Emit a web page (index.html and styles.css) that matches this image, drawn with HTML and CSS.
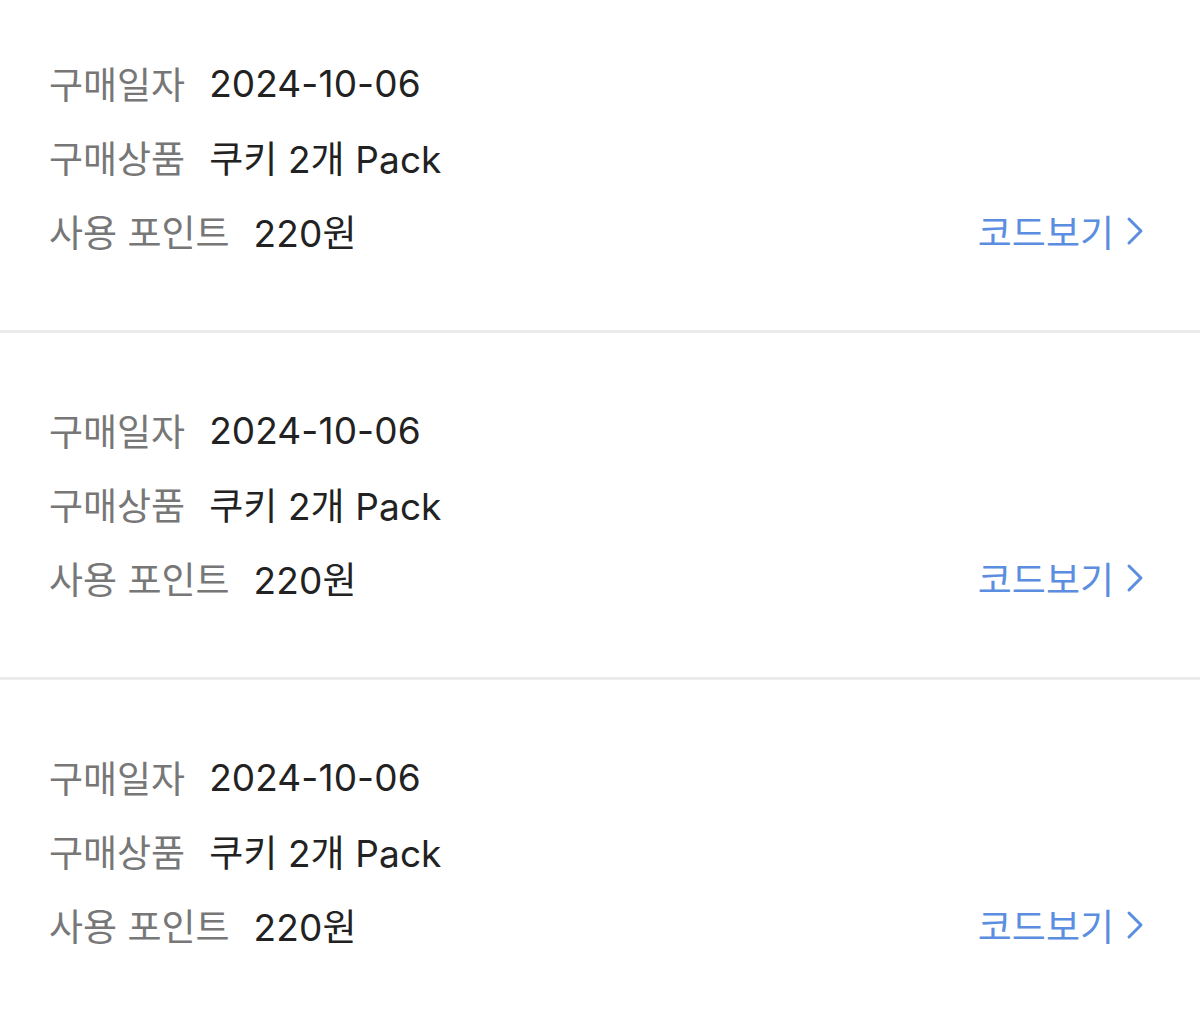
FILE: index.html
```html
<!DOCTYPE html>
<html lang="ko">
<head>
    <meta charset="UTF-8">
    <meta name="viewport" content="width=device-width, initial-scale=1.0">
    <title>구매 내역</title>
    <link rel="stylesheet" href="styles.css">
</head>
<body>
<ul class="order-list">
    <li class="order-item">
        <div class="order-row">
            <span class="order-label">구매일자</span>
            <span class="order-value">2024-10-06</span>
        </div>
        <div class="order-row">
            <span class="order-label">구매상품</span>
            <span class="order-value">쿠키 2개 Pack</span>
        </div>
        <div class="order-row">
            <span class="order-label">사용 포인트</span>
            <span class="order-value">220원</span>
            <a class="code-link" href="#">코드보기
                <svg class="chevron" width="20" height="30" viewBox="0 0 20 30"><path d="M4 3 L16 15 L4 27" fill="none" stroke="currentColor" stroke-width="3" stroke-linecap="round" stroke-linejoin="round"/></svg>
            </a>
        </div>
    </li>
    <li class="order-item">
        <div class="order-row">
            <span class="order-label">구매일자</span>
            <span class="order-value">2024-10-06</span>
        </div>
        <div class="order-row">
            <span class="order-label">구매상품</span>
            <span class="order-value">쿠키 2개 Pack</span>
        </div>
        <div class="order-row">
            <span class="order-label">사용 포인트</span>
            <span class="order-value">220원</span>
            <a class="code-link" href="#">코드보기
                <svg class="chevron" width="20" height="30" viewBox="0 0 20 30"><path d="M4 3 L16 15 L4 27" fill="none" stroke="currentColor" stroke-width="3" stroke-linecap="round" stroke-linejoin="round"/></svg>
            </a>
        </div>
    </li>
    <li class="order-item">
        <div class="order-row">
            <span class="order-label">구매일자</span>
            <span class="order-value">2024-10-06</span>
        </div>
        <div class="order-row">
            <span class="order-label">구매상품</span>
            <span class="order-value">쿠키 2개 Pack</span>
        </div>
        <div class="order-row">
            <span class="order-label">사용 포인트</span>
            <span class="order-value">220원</span>
            <a class="code-link" href="#">코드보기
                <svg class="chevron" width="20" height="30" viewBox="0 0 20 30"><path d="M4 3 L16 15 L4 27" fill="none" stroke="currentColor" stroke-width="3" stroke-linecap="round" stroke-linejoin="round"/></svg>
            </a>
        </div>
    </li>
</ul>
</body>
</html>
```

FILE: styles.css
```css
* {
    margin: 0;
    padding: 0;
    box-sizing: border-box;
}

body {
    background-color: #fff;
    font-family: Inter, "Noto Sans CJK KR", sans-serif;
    overflow: hidden;
}

.order-list {
    list-style: none;
}

.order-item {
    padding: 60px 55px 62px 49px;
    border-bottom: 3px solid #ebebeb;
}

.order-item:first-child {
    padding-top: 46px;
}

.order-row {
    display: flex;
    align-items: center;
    height: 74px;
    font-size: 37px;
}

.order-label {
    color: #777;
    margin-right: 24px;
}

.order-value {
    color: #222;
    letter-spacing: 0.1px;
}

.code-link {
    margin-left: auto;
    display: flex;
    align-items: center;
    gap: 11px;
    color: #5b8ee0;
    text-decoration: none;
}

.chevron {
    display: block;
}
```
